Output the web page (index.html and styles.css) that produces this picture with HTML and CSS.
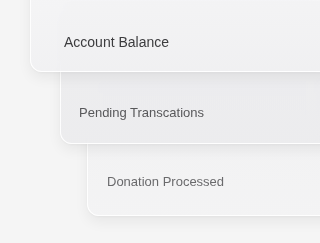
FILE: index.html
```html
<!DOCTYPE html>
<html>
<head>
<meta charset="utf-8">
<link rel="stylesheet" href="styles.css">
</head>
<body>
<div class="stack">
  <div class="card card-1"><span class="label">Account Balance</span></div>
  <div class="card card-2"><span class="label">Pending Transcations</span></div>
  <div class="card card-3"><span class="label">Donation Processed</span></div>
</div>
</body>
</html>
```
FILE: styles.css
```css
html, body {
  margin: 0;
  padding: 0;
  overflow: hidden;
}
body {
  background: #f5f5f5;
  font-family: "Liberation Sans", Arial, sans-serif;
}
.stack {
  width: 100%;
  height: 243px;
  overflow: hidden;
  display: flex;
  flex-direction: column;
  align-items: flex-start;
  position: relative;
}
.card {
  position: relative;
  flex: none;
  box-sizing: border-box;
  width: 400px;
  margin-right: -400px;
  border-radius: 12px;
  border: 1px solid rgba(255, 255, 255, 0.9);
  backdrop-filter: blur(6px);
  box-shadow: 0 6px 14px rgba(0, 0, 0, 0.06), 0 1px 3px rgba(0, 0, 0, 0.04);
  display: flex;
  flex-direction: column;
  justify-content: flex-end;
}
.label {
  display: block;
  white-space: nowrap;
}
.card-1 {
  z-index: 3;
  margin-left: 30px;
  margin-top: -30px;
  height: 102px;
  padding: 0 0 21px 33px;
  background: linear-gradient(180deg, rgba(246, 246, 247, 0.8), rgba(240, 240, 242, 0.8));
}
.card-1 .label {
  font-size: 14px;
  line-height: 16px;
  color: #3c3c3e;
}
.card-2 {
  z-index: 2;
  margin-left: 60px;
  margin-top: -72px;
  height: 144px;
  padding: 0 0 23px 18px;
  background: linear-gradient(180deg, rgba(236, 236, 238, 0.8), rgba(234, 234, 236, 0.8));
}
.card-2 .label {
  font-size: 13px;
  line-height: 15px;
  color: #58585a;
}
.card-3 {
  z-index: 1;
  margin-left: 87px;
  margin-top: -72px;
  height: 144px;
  padding: 0 0 26px 19px;
  background: linear-gradient(180deg, rgba(240, 240, 241, 0.8), rgba(243, 243, 244, 0.8));
}
.card-3 .label {
  font-size: 13px;
  line-height: 15px;
  color: #6a6a6c;
}
```
